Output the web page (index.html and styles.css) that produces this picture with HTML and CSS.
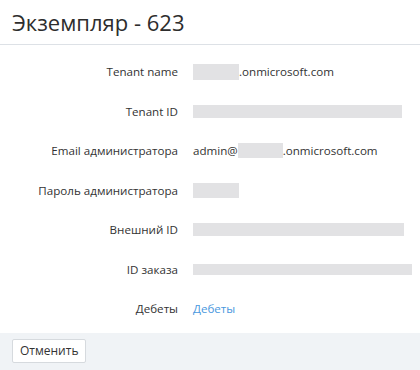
FILE: index.html
```html
<!DOCTYPE html>
<html lang="ru">
<head>
  <meta charset="UTF-8" />
  <title>Экземпляр - 623</title>
  <link rel="stylesheet" href="styles.css">
</head>
<body>

<div class="page">
  <h1 class="title">Экземпляр - 623</h1>

  <div class="details">
    <div class="row">
      <span class="label">Tenant name</span>
      <span class="value"><span class="mask mask-name"></span>.onmicrosoft.com</span>
    </div>
    <div class="row">
      <span class="label">Tenant ID</span>
      <span class="value"><span class="mask mask-id"></span></span>
    </div>
    <div class="row">
      <span class="label">Email администратора</span>
      <span class="value">admin@<span class="mask mask-mail"></span>.onmicrosoft.com</span>
    </div>
    <div class="row">
      <span class="label">Пароль администратора</span>
      <span class="value"><span class="mask mask-pass"></span></span>
    </div>
    <div class="row">
      <span class="label">Внешний ID</span>
      <span class="value"><span class="mask mask-ext"></span></span>
    </div>
    <div class="row">
      <span class="label">ID заказа</span>
      <span class="value"><span class="mask mask-order"></span></span>
    </div>
    <div class="row">
      <span class="label">Дебеты</span>
      <span class="value"><a href="#" class="link">Дебеты</a></span>
    </div>
  </div>

  <div class="footer">
    <button class="btn">Отменить</button>
  </div>
</div>

</body>
</html>
```

FILE: styles.css
```css
* {
  margin: 0;
  padding: 0;
  box-sizing: border-box;
}

html, body {
  background: #fff;
  font-family: 'Open Sans', sans-serif;
  color: #333;
}

.page {
  width: 420px;
  height: 370px;
  display: flex;
  flex-direction: column;
}

.title {
  height: 45px;
  padding: 7px 12px 0;
  font-size: 22px;
  font-weight: 400;
  line-height: 30px;
  color: #2d2d2d;
  border-bottom: 1px solid #dde1e6;
}

/* Details grid */
.details {
  padding: 7px 0 4.5px;
}

.row {
  display: flex;
  align-items: center;
  height: 39.5px;
  font-size: 11.6px;
}

.label {
  width: 178px;
  text-align: right;
  flex-shrink: 0;
  margin-right: 15px;
}

.value {
  display: flex;
  align-items: center;
}

.mask {
  display: inline-block;
  background: #e2e2e4;
}

.mask-name { width: 46px; height: 16px; }
.mask-id { width: 209px; height: 13px; }
.mask-mail { width: 45px; height: 15px; }
.mask-pass { width: 46px; height: 15px; }
.mask-ext { width: 211px; height: 13px; }
.mask-order { width: 219px; height: 11px; }

.link {
  color: #4a98de;
  text-decoration: none;
}

/* Footer */
.footer {
  flex: 1;
  background: #f0f3f6;
  padding: 5px 12px;
}

.btn {
  height: 24px;
  padding: 0 7px;
  font-family: 'Open Sans', sans-serif;
  font-size: 12px;
  color: #333;
  background: #fff;
  border: 1px solid #d6dade;
  border-radius: 2px;
}
```
